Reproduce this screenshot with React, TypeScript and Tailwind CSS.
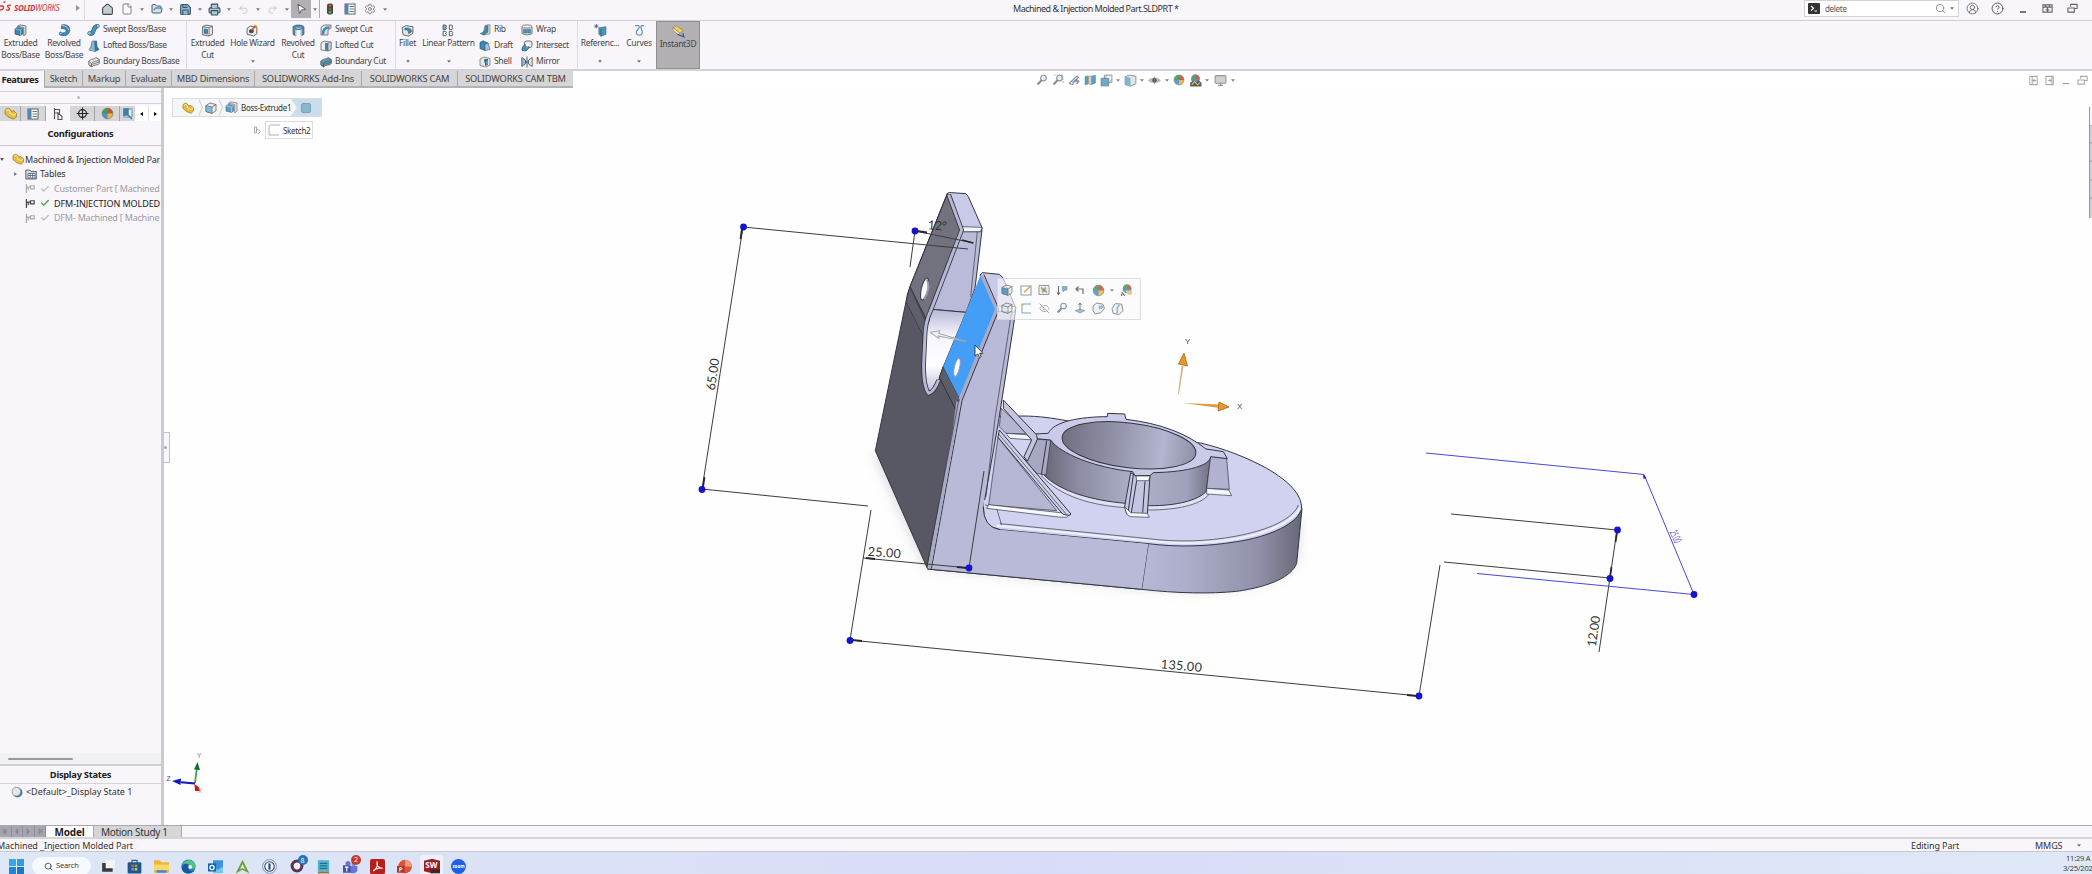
import type { ReactNode } from "react";
import {
  Home,
  File,
  FolderOpen,
  Save,
  Printer,
  Undo2,
  Redo2,
  MousePointer2,
  Settings,
  Search,
  CircleUserRound,
  CircleHelp,
  Crosshair,
  Check,
  Eye,
  EyeOff,
  Monitor,
} from "lucide-react";

function Svg({ size = 12, children }: { size?: number; children: ReactNode }) {
  return (
    <svg width={size} height={size} viewBox="0 0 12 12" fill="none" className="shrink-0">
      {children}
    </svg>
  );
}

function Caret({ className = "w-[10px]" }: { className?: string }) {
  return (
    <span className={`flex shrink-0 items-center justify-center ${className}`}>
      <svg width="4" height="3" viewBox="0 0 4 3">
        <path d="M0 0.3h4L2 2.7z" fill="#777" />
      </svg>
    </span>
  );
}

function Slot({ w, children }: { w: string; children: ReactNode }) {
  return <span className={`flex h-full shrink-0 items-center justify-center ${w}`}>{children}</span>;
}

/* ---------- feature glyphs ---------- */

function CubeIcon({ size = 12, front = "#4d94bd" }: { size?: number; front?: string }) {
  return (
    <Svg size={size}>
      <path d="M1 3.5 5 1l6 1.5v6.3L7 11.3 1 9.5z" fill="#e8eaec" stroke="#666" strokeWidth=".8" />
      <path d="M1 3.5 7 5v6.3L1 9.5z" fill={front} stroke="#49626f" strokeWidth=".6" />
      <path d="M7 5l4-2.5" stroke="#666" strokeWidth=".8" />
    </Svg>
  );
}

function ExtrudeIcon() {
  return (
    <Svg size={13}>
      <path d="M3 2.2 5.5.8 11 1.8v7.5L9 11V3.2z" fill="#e8e8e8" stroke="#666" strokeWidth=".8" />
      <path d="M1 4.5 3 3.2l5 1v5L6 10.5 1 9.3z" fill="#3b88b5" stroke="#24516d" strokeWidth=".7" />
      <path d="M1 4.5l5 1v5M6 5.5l2-1.3" stroke="#a6d4ea" strokeWidth=".6" />
    </Svg>
  );
}

function RevolveIcon() {
  return (
    <Svg size={13}>
      <path d="M3.5.8C8-.2 11.500 2.500 10.800 6.500S5 12.200 1 9.600l1-2.400c2.500 1.600 5.300 1 5.500-.8S5.500 4.500 3 4.200z" fill="#3b88b5" stroke="#24516d" strokeWidth=".6" />
      <path d="M3.300 1.200c3.200.3 5.700 1.600 6.700 4.600M1.300 9.500l3-1.700" stroke="#a6d4ea" strokeWidth=".9" />
    </Svg>
  );
}

function SweptIcon() {
  return (
    <Svg size={13}>
      <path d="M2.5 9.5C8 11 4 4 9.5 3" stroke="#24516d" strokeWidth="4" />
      <path d="M2.5 9.5C8 11 4 4 9.5 3" stroke="#4796c0" strokeWidth="2.8" />
      <circle cx="2.3" cy="9.4" r="1.7" fill="#8fc3dd" stroke="#24516d" strokeWidth=".5" />
      <circle cx="10" cy="2.7" r="1.5" fill="#8fc3dd" stroke="#24516d" strokeWidth=".5" />
    </Svg>
  );
}

function LoftIcon() {
  return (
    <Svg size={12}>
      <path d="M4 1h4.500l.5 5.500 2 3L7 11.500 1 10l2-3.500z" fill="#3b88b5" stroke="#53616a" strokeWidth=".6" />
      <path d="M4 1l-.5 6L1 10l6 1.500L6.500 2z" fill="#8ab8d0" />
      <path d="M6.500 2 7 11.500l4-2-2-3L8.500 1z" fill="#2e749f" />
    </Svg>
  );
}

function BoundaryIcon({ fill = "#e6e7e9" }: { fill?: string }) {
  return (
    <Svg size={12}>
      <path d="M.8 5.500C3 2 6 4 8 1.500l3.300 2v4C9 10 6 8 3.500 11L.8 9z" fill={fill} stroke="#555" strokeWidth=".8" />
      <path d="M.8 5.500 3.500 7.500C6 4.500 9 6 11.300 3.500M3.500 7.500V11M2 9.800C5 7 8 8 11.300 5.500" stroke="#555" strokeWidth=".7" />
    </Svg>
  );
}

function CutIcon({ size = 13 }: { size?: number }) {
  return (
    <Svg size={size}>
      <path d="M1.5 2.5 4.5 1l6 1v7.500L7.500 11l-6-1z" fill="#eee" stroke="#666" strokeWidth=".9" />
      <path d="M7.500 3.500V11M1.500 2.500l6 1 3-1.500" stroke="#666" strokeWidth=".8" />
      <path d="M3 4.500l3 .5v4l-3-.5z" fill="#3b88b5" stroke="#24516d" strokeWidth=".6" />
    </Svg>
  );
}

function HoleWizardIcon() {
  return (
    <Svg size={13}>
      <path d="M1 4 4 2l6 1v6L7 11 1 9.500z" fill="#eee" stroke="#666" strokeWidth=".9" />
      <ellipse cx="5" cy="6.500" rx="2.300" ry="2" fill="#4a4a4a" />
      <path d="M5 6 9 1.500" stroke="#c8503c" strokeWidth="1.400" />
      <path d="M7.500.5l1 1.300L10 1.300l-.4 1.500 1.200 1-1.500.2" stroke="#e2a52c" strokeWidth=".9" />
    </Svg>
  );
}

function RevolvedCutIcon() {
  return (
    <Svg size={13}>
      <path d="M1 2.500C3 .5 9 .5 11 2.500v7L8.500 11V5h-5v6L1 9.500z" fill="#4a8fb6" stroke="#555" strokeWidth=".8" />
      <path d="M3.500 5v6M8.500 5v6M4 3.500c1 .8 3 .8 4 0" stroke="#e8eef2" strokeWidth=".8" />
    </Svg>
  );
}

function SweptCutIcon() {
  return (
    <Svg size={12}>
      <path d="M1 3.500 4 1h7v3L8 6v5H1z" fill="#dcdfe1" stroke="#666" strokeWidth=".8" />
      <path d="M3 10.500C3 6 5 3.500 9.500 3.300" stroke="#3b88b5" strokeWidth="2.400" />
    </Svg>
  );
}

function LoftedCutIcon() {
  return (
    <Svg size={12}>
      <path d="M1 3 4 1.200l7 .8v7.500L8 11l-7-1z" fill="#eee" stroke="#666" strokeWidth=".8" />
      <path d="M5 3v7l3 1V3z" fill="#3b88b5" />
      <path d="M8 3v8l3-1.500V2z" fill="#cfd2d4" stroke="#666" strokeWidth=".6" />
    </Svg>
  );
}

function FilletIcon() {
  return (
    <Svg size={13}>
      <path d="M1 3.500 4.500 1.500 11 2.500v6L7 11.200 2 10z" fill="#e4e6e8" stroke="#666" strokeWidth=".9" />
      <path d="M3.500 4c3-1 6 0 6.500 3L7 9C7 6.500 6 5 3.500 5.500z" fill="#3b88b5" stroke="#24516d" strokeWidth=".5" />
    </Svg>
  );
}

function PatternIcon() {
  return (
    <Svg size={13}>
      {[
        [1, 1],
        [6.8, 1],
        [1, 6.8],
        [6.8, 6.8],
      ].map(([x, y], i) => (
        <path
          key={i}
          d={`M${x} ${y}h2.4a1.3 1.3 0 0 1 0 2.1h.3a1.3 1.3 0 0 1-.3 2H${x}z`}
          fill={i === 0 ? "#7fb5d0" : "#f1f3f5"}
          stroke="#4c5b66"
          strokeWidth=".9"
        />
      ))}
    </Svg>
  );
}

function RibIcon() {
  return (
    <Svg size={12}>
      <path d="M6 1.500 9 .8h2v9L4 11z" fill="#d8dadc" stroke="#777" strokeWidth=".7" />
      <path d="M1 9.500C5 8.500 6 6 6.500 2L9 1.500V8l-4 3z" fill="#3b88b5" stroke="#4e5c66" strokeWidth=".5" />
    </Svg>
  );
}

function DraftIcon() {
  return (
    <Svg size={12}>
      <path d="M1 2.500 4 .8 9 3v6L6 10.500 1 8.500z" fill="#3b88b5" stroke="#24516d" strokeWidth=".7" />
      <path d="M6 4.500v6l5-1.200L9 3z" fill="#9dc8dd" stroke="#49626f" strokeWidth=".6" />
    </Svg>
  );
}

function ShellIcon() {
  return (
    <Svg size={12}>
      <path d="M1 3 5 1l6 1.500V9L7 11 1 9.500z" fill="#e4e6e8" stroke="#777" strokeWidth=".8" />
      <path d="M5 3.500 9 3v5.500L6.500 10z" fill="#2c4a66" />
      <path d="M6.500 5 9 4v4l-2 1z" fill="#49a9b8" />
    </Svg>
  );
}

function WrapIcon() {
  return (
    <Svg size={12}>
      <path d="M1 2.500v7c2 1.800 8 1.800 10 0v-7" fill="#e4e6e8" stroke="#666" strokeWidth=".9" />
      <ellipse cx="6" cy="2.500" rx="5" ry="1.600" fill="#f4f4f4" stroke="#666" strokeWidth=".8" />
      <path d="M2.500 5.500h3V9h-3zM6.500 5.500h3V9h-3z" fill="#4d94bd" stroke="#3a6b8b" strokeWidth=".6" />
    </Svg>
  );
}

function IntersectIcon() {
  return (
    <Svg size={12}>
      <rect x="3.500" y="1" width="7.500" height="6.500" rx="2" fill="#e8e8e8" stroke="#666" strokeWidth=".9" />
      <path d="M1 8 3 5l4-.5L8 8 5 11 1 10.500z" fill="#4d94bd" stroke="#24516d" strokeWidth=".7" />
      <circle cx="6.500" cy="5" r="1.700" fill="#fff" />
    </Svg>
  );
}

function MirrorIcon() {
  return (
    <Svg size={12}>
      <path d="M.8 1.500v9L4.500 8V4z" fill="#8bbbd2" stroke="#44535e" strokeWidth=".8" />
      <path d="M11.200 1.500v9L7.500 8V4z" fill="#e4e6e8" stroke="#44535e" strokeWidth=".8" />
      <path d="M6 .5v11M4.500 6h3" stroke="#333" strokeWidth=".8" />
    </Svg>
  );
}

function ReferenceIcon() {
  return (
    <Svg size={13}>
      <path d="M4.500 3.500 11 2.500v7l-4.500 1.800-2-1.800z" fill="#4d94bd" stroke="#3b6885" strokeWidth=".6" />
      <path d="M6.500 4.500v6.800" stroke="#24516d" strokeWidth=".6" />
      <path d="M2.200 0v4M.2 2h4M.8.6l2.800 2.800M3.600.6.8 3.400" stroke="#3f5a6d" strokeWidth=".7" />
    </Svg>
  );
}

function CurvesIcon() {
  return (
    <Svg size={13}>
      <path d="M2 1.500h3c3 2-3 4-2 7 1 2.500 4.500 2.500 5.500 0 1-3-3-5-.5-7h2" stroke="#5c8dac" strokeWidth="1.100" />
    </Svg>
  );
}

function InstantIcon() {
  return (
    <Svg size={13}>
      <path d="M1 2.500 4 .8l6.500 4.500L7 7.500z" fill="#f2cf55" stroke="#8c7424" strokeWidth=".5" />
      <path d="M1 2.500v2.300l6 5V7.500z" fill="#f9efc9" stroke="#7d7250" strokeWidth=".5" />
      <path d="M5 8.500l6 2.500-1-3.500" stroke="#2f5d8b" strokeWidth="1.100" />
    </Svg>
  );
}

function PartIcon({ size = 13 }: { size?: number }) {
  return (
    <Svg size={size}>
      <path d="M1 3.500C1 1.500 4 .5 5.500 2l1 2L9 3.500 11.500 6v3L9 11.300 4.500 9.500 1 6.500z" fill="#e9bc3a" stroke="#94752a" strokeWidth=".7" />
      <path d="M2 3.500c1-1.500 3-1.200 3.300.2L5.500 6l3.500 1.500 2-1.500" stroke="#fbe9a6" strokeWidth="1" />
    </Svg>
  );
}

function BallIcon({ size = 12 }: { size?: number }) {
  return (
    <Svg size={size}>
      <circle cx="6" cy="6" r="5" fill="#4d8fc9" />
      <path d="M6 6V1a5 5 0 0 0-5 5z" fill="#3f9c57" />
      <path d="M6 6V1a5 5 0 0 1 5 5z" fill="#d14a36" />
      <path d="M6 6h5a5 5 0 0 1-5 5z" fill="#e9b73d" />
      <circle cx="6" cy="6" r="5" stroke="#777" strokeWidth=".5" />
    </Svg>
  );
}

function LensIcon({ area = false }: { area?: boolean }) {
  return (
    <Svg size={12}>
      {area && <path d="M2 1h9v8" stroke="#888" strokeWidth=".8" strokeDasharray="1.5 1" />}
      <circle cx="7.5" cy="4" r="2.8" fill="#eaf2f7" stroke="#7d868c" strokeWidth="1.1" />
      <path d="M5.500 6.200 1.500 10.500" stroke="#6d8290" strokeWidth="2" />
    </Svg>
  );
}

/* ---------- title bar ---------- */

function TitleBar() {
  return (
    <header className="flex h-[21px] shrink-0 border-b border-[#cfced1] bg-[#f8f6fa]">
      <div className="flex w-[85px] items-center border-r border-[#dddce0] pb-1">
        <svg width="12" height="14" viewBox="0 0 12 14" fill="none" stroke="#d8383c">
          <path d="M0 5h2.500c2 1 1 4-2.500 4M3.500 1.500l2-.8M11 4.500C8 3.500 6.500 5 8.500 6.500s1 3-2.500 2.500" strokeWidth="1.400" />
        </svg>
        <span className="ml-[2px] w-[51px] whitespace-nowrap text-[8px] font-bold italic tracking-[-0.3px] text-[#d8383c]">
          SOLID<span className="font-normal">WORKS</span>
        </span>
        <span className="ml-[11px] border-y-[3px] border-l-4 border-y-transparent border-l-[#999]" />
      </div>
      <div className="ml-3 flex h-[18px] items-center">
        <Slot w="w-[20px]">
          <Home size={13} color="#444" fill="#c3cdd5" />
        </Slot>
        <Slot w="w-[20px]">
          <File size={12} color="#666" fill="#fff" strokeWidth={1.6} />
        </Slot>
        <Caret />
        <Slot w="w-[19px]">
          <FolderOpen size={12} color="#43627a" fill="#cfe0ea" />
        </Slot>
        <Caret />
        <Slot w="w-[19px]">
          <Save size={13} color="#3a566b" fill="#8db6cf" />
        </Slot>
        <Caret />
        <Slot w="w-[19px]">
          <Printer size={13} color="#3d4d58" fill="#a9c9d9" />
        </Slot>
        <Caret />
        <Slot w="w-[19px]">
          <Undo2 size={11} color="#c6c5c9" />
        </Slot>
        <Caret />
        <Slot w="w-[19px]">
          <Redo2 size={11} color="#c6c5c9" />
        </Slot>
        <Caret className="w-[9px]" />
        <span className="flex h-[18px] w-[20px] items-center justify-center bg-[#b2b0b3]">
          <MousePointer2 size={12} color="#666" fill="#fff" className="rotate-[12deg]" />
        </span>
        <span className="flex h-[18px] w-[9px] items-center justify-center border-r border-[#aaa]">
          <Caret />
        </span>
        <Slot w="w-[20px]">
          <Svg size={12}>
            <rect x="3" y=".5" width="6" height="11" rx="2" fill="#474747" />
            <circle cx="6" cy="2.7" r="1.4" fill="#d8453a" />
            <circle cx="6" cy="6" r="1.3" fill="#7c6b30" />
            <circle cx="6" cy="9.2" r="1.4" fill="#47b04b" />
          </Svg>
        </Slot>
        <Slot w="w-[20px]">
          <ListIcon />
        </Slot>
        <Slot w="w-[20px]">
          <Settings size={12} color="#777" strokeWidth={1.8} />
        </Slot>
        <Caret />
      </div>
      <div className="ml-[623px] w-[791px] whitespace-nowrap pt-[3px] text-[9px] leading-[12px] tracking-[-0.5px] text-[#333]">
        Machined &amp; Injection Molded Part.SLDPRT *
      </div>
      <div className="flex h-[17px] w-[155px] shrink-0 items-center border border-[#d2d1d5] bg-white pl-[3px] text-[8px] tracking-[-0.3px] text-[#555]">
        <span className="flex h-[11px] w-[12px] items-center justify-center rounded-[1px] bg-[#333]">
          <svg width="8" height="7" viewBox="0 0 8 7" fill="none" stroke="#fff" strokeWidth="1.2">
            <path d="M1 1l2.5 2.300L1 5.600M4.500 6H7" />
          </svg>
        </span>
        <span className="ml-[5px] flex-1">delete</span>
        <Search size={11} color="#888" />
        <Caret className="mx-[2px] w-[8px]" />
      </div>
      <div className="ml-px flex h-[17px] items-center">
        <Slot w="w-[25px]">
          <CircleUserRound size={13} color="#666" strokeWidth={1.6} />
        </Slot>
        <Slot w="w-[25px]">
          <CircleHelp size={13} color="#555" strokeWidth={1.8} />
        </Slot>
        <Slot w="w-[25px]">
          <span className="mt-[6px] h-[2px] w-[6px] bg-[#777]" />
        </Slot>
        <Slot w="w-[25px]">
          <Svg size={11}>
            <path d="M1 2h10v8H1zM1 4.500h10M4 2v2.500M8 2v2.500M4 7.500h4M6 5v5" stroke="#666" strokeWidth="1.2" />
          </Svg>
        </Slot>
        <Slot w="w-[25px]">
          <RestoreIcon color="#666" />
        </Slot>
      </div>
    </header>
  );
}

function ListIcon() {
  return (
    <Svg size={12}>
      <rect x="1" y="1" width="10" height="10" fill="#fff" stroke="#456" strokeWidth=".9" />
      <rect x="1" y="1" width="3.5" height="10" fill="#5388aa" />
      <path d="M5.500 3.500h4.500M5.500 6h4.500M5.500 8.500h4.500" stroke="#667" strokeWidth=".9" />
    </Svg>
  );
}

function RestoreIcon({ color }: { color: string }) {
  return (
    <Svg size={11}>
      <path d="M4 4V1.500h7V6H8" stroke={color} strokeWidth="1.2" />
      <path d="M1 5.500h7V10H1z" stroke={color} strokeWidth="1.2" />
    </Svg>
  );
}

/* ---------- ribbon ---------- */

interface BigButtonProps {
  w: string;
  icon: ReactNode;
  lines: string[];
  caret?: boolean;
  active?: boolean;
}

function BigButton({ w, icon, lines, caret, active }: BigButtonProps) {
  return (
    <button
      className={`flex h-[48px] shrink-0 flex-col items-center pt-[3px] ${w} ${
        active ? "border border-[#8f8e91] bg-[#b2b0b3] pt-[2px]" : ""
      }`}
    >
      <span className="flex h-[13px] items-center">{icon}</span>
      {lines.map((line) => (
        <span key={line} className="whitespace-nowrap leading-[11.5px]">
          {line}
        </span>
      ))}
      {caret && <Caret className="mt-[11px] w-[10px]" />}
    </button>
  );
}

function SmallList({ w, items }: { w: string; items: [ReactNode, string][] }) {
  return (
    <div className={`flex shrink-0 flex-col ${w}`}>
      {items.map(([icon, label]) => (
        <button key={label} className="flex h-[16px] items-center whitespace-nowrap pt-px">
          <span className="mr-[3px] flex w-[13px] justify-center">{icon}</span>
          {label}
        </button>
      ))}
    </div>
  );
}

function Ribbon() {
  return (
    <div className="flex h-[50px] shrink-0 border-b-2 border-[#d3d2d5] bg-[#f8f6fa] text-[8.5px] tracking-[-0.32px] text-[#444]">
      <BigButton w="w-[41px]" icon={<ExtrudeIcon />} lines={["Extruded", "Boss/Base"]} />
      <BigButton w="w-[46px]" icon={<RevolveIcon />} lines={["Revolved", "Boss/Base"]} />
      <SmallList
        w="w-[100px] border-r border-[#dddce0]"
        items={[
          [<SweptIcon />, "Swept Boss/Base"],
          [<LoftIcon />, "Lofted Boss/Base"],
          [<BoundaryIcon />, "Boundary Boss/Base"],
        ]}
      />
      <BigButton w="w-[41px]" icon={<CutIcon />} lines={["Extruded", "Cut"]} />
      <BigButton w="w-[49px]" icon={<HoleWizardIcon />} lines={["Hole Wizard"]} caret />
      <BigButton w="w-[42px]" icon={<RevolvedCutIcon />} lines={["Revolved", "Cut"]} />
      <SmallList
        w="w-[77px] border-r border-[#dddce0]"
        items={[
          [<SweptCutIcon />, "Swept Cut"],
          [<LoftedCutIcon />, "Lofted Cut"],
          [<BoundaryIcon fill="#5a9cc0" />, "Boundary Cut"],
        ]}
      />
      <BigButton w="w-[23px]" icon={<FilletIcon />} lines={["Fillet"]} caret />
      <BigButton w="w-[59px]" icon={<PatternIcon />} lines={["Linear Pattern"]} caret />
      <SmallList
        w="w-[42px]"
        items={[
          [<RibIcon />, "Rib"],
          [<DraftIcon />, "Draft"],
          [<ShellIcon />, "Shell"],
        ]}
      />
      <SmallList
        w="w-[58px] border-r border-[#dddce0]"
        items={[
          [<WrapIcon />, "Wrap"],
          [<IntersectIcon />, "Intersect"],
          [<MirrorIcon />, "Mirror"],
        ]}
      />
      <BigButton w="w-[44px]" icon={<ReferenceIcon />} lines={["Referenc..."]} caret />
      <BigButton w="w-[34px]" icon={<CurvesIcon />} lines={["Curves"]} caret />
      <BigButton w="w-[44px]" icon={<InstantIcon />} lines={["Instant3D"]} active />
    </div>
  );
}

const tabs = [
  ["Features", "w-[44px]"],
  ["Sketch", "w-[38px]"],
  ["Markup", "w-[43px]"],
  ["Evaluate", "w-[46px]"],
  ["MBD Dimensions", "w-[83px]"],
  ["SOLIDWORKS Add-Ins", "w-[107px]"],
  ["SOLIDWORKS CAM", "w-[96px]"],
  ["SOLIDWORKS CAM TBM", "w-[116px]"],
];

function TabRow() {
  return (
    <div className="flex h-[17px] shrink-0 bg-white">
      {tabs.map(([label, w], i) => (
        <div
          key={label}
          className={`flex shrink-0 items-center justify-center whitespace-nowrap text-[9.3px] ${w} ${
            i === 0
              ? "bg-[#f8f6fa] pr-[4px] font-bold tracking-[-0.45px] text-[#222]"
              : "border-b-2 border-l border-b-[#b3b2b5] border-l-[#a9a8ab] bg-[#d6d5d8] pt-px tracking-[-0.2px] text-[#444]"
          }`}
        >
          {label}
        </div>
      ))}
      <div className="ml-[461px] flex h-[18px] items-center opacity-90">
        <Slot w="w-[16px]"><LensIcon /></Slot>
        <Slot w="w-[16px]"><LensIcon area /></Slot>
        <Slot w="w-[16px]">
          <Svg>
            <path d="M1 9.500 9 2l1.500 1.500L5 8M1 9.500l4 1V8l5-.5M8 5l3 2.500L8.500 10" stroke="#72879a" strokeWidth="1.1" />
          </Svg>
        </Slot>
        <Slot w="w-[16px]">
          <Svg>
            <path d="M1 2.500 4 2v8l-3 1z" fill="#4d94bd" stroke="#6b7d88" strokeWidth=".6" />
            <path d="M4.500 2h3v8.500l-3-.5z" fill="#c9cdd0" stroke="#777" strokeWidth=".6" />
            <path d="M8 2l3.500-.8V9L8 10.500z" fill="#4d94bd" stroke="#6b7d88" strokeWidth=".6" />
          </Svg>
        </Slot>
        <Slot w="w-[16px]">
          <Svg size={13}>
            <path d="M4 1h7v7H4z" fill="#f1f1f1" stroke="#888" strokeWidth=".9" />
            <path d="M1 4h7v7H1z" fill="#5d9fc3" stroke="#58707f" strokeWidth=".7" />
            <path d="M4 4 7 1M8 8l3-3" stroke="#888" strokeWidth=".8" />
          </Svg>
        </Slot>
        <Caret className="w-[8px]" />
        <Slot w="w-[16px]">
          <Svg size={13}>
            <path d="M1 2.500 5 1l6 1v7L6 11.300 1 9.800z" fill="#dfe3e6" stroke="#777" strokeWidth=".8" />
            <path d="M1 2.500l5 1v7.800L1 9.800z" fill="#73aecb" />
          </Svg>
        </Slot>
        <Caret className="w-[8px]" />
        <Slot w="w-[17px]">
          <Svg size={13}>
            <path d="M.5 6C3 3 9 3 11.500 6 9 8.500 3 8.500.5 6z" fill="#b9b9bc" stroke="#999" strokeWidth=".6" />
            <circle cx="6" cy="5.800" r="2" fill="#444" />
            <path d="M6 2.500v7" stroke="#777" strokeWidth=".6" />
          </Svg>
        </Slot>
        <Caret className="w-[8px]" />
        <Slot w="w-[16px]"><BallIcon /></Slot>
        <Slot w="w-[16px]">
          <Svg size={13}>
            <circle cx="6" cy="4.500" r="4" fill="#4b87bd" />
            <path d="M6 4.500v-4a4 4 0 0 1 4 4z" fill="#d14a36" />
            <path d="M6 4.500v-4a4 4 0 0 0-4 4z" fill="#3f9c57" />
            <path d="M1 11.500V8l3-2 2 2 3-2 2.500 2v3.500z" fill="#4b4b4b" />
            <path d="M2.500 10 5 7l3 3 2-2" stroke="#e6b93f" strokeWidth="1" />
          </Svg>
        </Slot>
        <Caret className="w-[8px]" />
        <Slot w="w-[18px]"><Monitor size={13} color="#888" fill="#ccc" /></Slot>
        <Caret className="w-[7px]" />
      </div>
      <div className="ml-auto mr-[2px] flex h-[18px] items-center">
        <Slot w="w-[16px]">
          <Svg size={11}>
            <path d="M1 1.500h8v9H1zM3.500 1.500v9M8 6H5M6 4.500 4.500 6 6 7.500" stroke="#aaa" strokeWidth="1.1" />
          </Svg>
        </Slot>
        <Slot w="w-[16px]">
          <Svg size={11}>
            <path d="M1 1.500h8v9H1zM7.500 1.500v9M3 6h3M5 4.500 6.500 6 5 7.500" stroke="#aaa" strokeWidth="1.1" />
          </Svg>
        </Slot>
        <Slot w="w-[16px]">
          <span className="mt-[6px] h-px w-[6px] bg-[#999]" />
        </Slot>
        <Slot w="w-[16px]">
          <RestoreIcon color="#aaa" />
        </Slot>
      </div>
    </div>
  );
}

/* ---------- configuration panel ---------- */

function ConfigGlyph({ color = "#444" }: { color?: string }) {
  return (
    <svg width="11" height="11" viewBox="0 0 12 12" fill="none" stroke={color} strokeWidth="1.3">
      <path d="M1.500 1v10M1.500 4.500h4M6 3h4v3.500H6zM3.500 8V4.500" />
    </svg>
  );
}

function ConfigRow({ label, active = false }: { label: string; active?: boolean }) {
  return (
    <div className={`flex h-[14.7px] items-center whitespace-nowrap pl-[25px] ${active ? "tracking-[-0.08px] text-[#222]" : "text-[#9c9b9f]"}`}>
      <ConfigGlyph color={active ? "#444" : "#aaa"} />
      <Check size={10} strokeWidth={3} color={active ? "#3aa826" : "#bbb"} className="ml-[4px] mr-[4px] shrink-0" />
      {label}
    </div>
  );
}

function SidePanel() {
  return (
    <aside className="flex w-[164px] shrink-0 flex-col border-r-[3px] border-[#cbcacd] bg-[#f8f6fa] text-[9px] tracking-[-0.2px] text-[#333]">
      <div className="mt-[3px] flex h-[13px] items-center justify-center border-b border-t border-[#d5d4d7]">
        <span className="-ml-[4px] h-[3px] w-[3px] rounded-full bg-[#bbb]" />
      </div>
      <div className="mt-[2px] flex h-[15px] bg-[#d6d5d8]">
        <Slot w="w-[21px] border-r border-[#a5a4a7]"><PartIcon /></Slot>
        <Slot w="w-[25px] border-r border-[#a5a4a7]"><ListIcon /></Slot>
        <Slot w="w-[24px] bg-[#f8f6fa]">
          <svg width="11" height="12" viewBox="0 0 11 12" fill="none" stroke="#555">
            <path d="M1.500 0v11M1.500 1.500h5v3.500h-5M5 5l4 3.500v3H5z" strokeWidth="1.1" />
          </svg>
        </Slot>
        <Slot w="w-[25px] border-r border-[#a5a4a7]">
          <Svg size={13}>
            <circle cx="6" cy="6" r="3.600" stroke="#222" strokeWidth="1.1" />
            <path d="M6 .5v11M.5 6h11" stroke="#222" strokeWidth="1" />
          </Svg>
        </Slot>
        <Slot w="w-[25px] border-r border-[#a5a4a7]"><BallIcon size={13} /></Slot>
        <Slot w="w-[15px]">
          <Svg size={12}>
            <path d="M2 1h8v8H2z" fill="#e9eff3" stroke="#477" strokeWidth=".7" />
            <path d="M2 1h4v6H2zM6 7l4 4" fill="#3d7fa8" stroke="#3d7fa8" strokeWidth="1.5" />
          </Svg>
        </Slot>
        <Slot w="w-[13px] bg-white"><span className="border-y-[2.5px] border-r-[3px] border-y-transparent border-r-black" /></Slot>
        <Slot w="w-[13px] border-l border-[#ddd] bg-white"><span className="border-y-[2.5px] border-l-[3px] border-y-transparent border-l-black" /></Slot>
      </div>
      <div className="mt-px flex h-[24px] items-center justify-center border-b border-[#cbcacd] text-[9.3px] font-bold text-[#222]">
        Configurations
      </div>
      <div className="flex flex-col pt-[6px]">
        <div className="flex h-[14.7px] items-center whitespace-nowrap">
          <span className="mr-[8px] border-x-[2.5px] border-t-[3px] border-x-transparent border-t-[#555]" />
          <PartIcon size={12} />
          <span className="ml-[1px] tracking-[-0.18px]">Machined &amp; Injection Molded Par</span>
        </div>
        <div className="flex h-[14.7px] items-center pl-[14px]">
          <span className="mr-[8px] border-y-[2.5px] border-l-[3px] border-y-transparent border-l-[#777]" />
          <Svg size={12}>
            <path d="M.8 2h4l1 1.500h5.500V11H.8z" fill="#dcdde0" stroke="#555" strokeWidth=".9" />
            <path d="M3 5.500h7V10H3zM3 7.500h7M5.300 5.500V10M7.600 5.500V10" fill="#fff" stroke="#41617a" strokeWidth=".8" />
          </Svg>
          <span className="ml-[3px]">Tables</span>
        </div>
        <ConfigRow label="Customer Part [ Machined" />
        <ConfigRow label="DFM-INJECTION MOLDED" active />
        <ConfigRow label="DFM- Machined [ Machine" />
      </div>
      <div className="mt-auto flex h-[13px] items-center border-b-2 border-[#d0cfd2] bg-[#f1f0f2] pl-[8px]">
        <span className="h-[2px] w-[65px] rounded bg-[#99989b]" />
      </div>
      <div className="flex h-[18px] items-center justify-center border-b border-[#d5d4d7] pt-px text-[9.3px] font-bold tracking-[-0.28px] text-[#222]">
        Display States
      </div>
      <div className="flex h-[41px] items-start pl-[11px] pt-[2px]">
        <Svg size={12}>
          <circle cx="6.500" cy="6.500" r="5" fill="#3d7fa8" />
          <circle cx="5.300" cy="5.600" r="4.300" fill="#e4e8eb" stroke="#888" strokeWidth=".7" />
        </Svg>
        <span className="ml-[3px] leading-[12px] tracking-[-0.04px]">&lt;Default&gt;_Display State 1</span>
      </div>
    </aside>
  );
}

/* ---------- model ---------- */

const EDGE = "#33343f";

function Flange() {
  // base body, boss and gussets, drawn at triple scale
  return (
    <g transform="translate(840 380) scale(.33333)" stroke={EDGE} strokeWidth="3" strokeLinejoin="round">
      <path d="M262 567 905 628C1010 640 1110 642 1190 634 1290 620 1355 590 1370 550L1386 385 1000 300 430 330z" fill="url(#rim)" />
      <path
        d="M430 380 440 110 545 108C600 108 640 115 680 122L1085 190C1150 205 1220 232 1280 265 1350 305 1385 345 1385 385 1375 430 1290 470 1190 485 1100 500 1010 502 925 491L480 449Q425 440 430 380z"
        fill="#d0d2ef"
      />
      <path d="M470 438 480 438 925 482C1010 493 1100 491 1190 476 1290 459 1362 421 1380 385" fill="none" stroke="#eeeef9" strokeWidth="7" />
      <path d="M480 431 925 476C1010 487 1100 485 1185 469 1290 450 1360 415 1375 375" fill="none" strokeWidth="2" />
      <path d="M925 491 905 628" fill="none" />
      <path d="M436 375 470 385 485 436" fill="none" strokeWidth="2" />

      {/* boss fillet */}
      <path d="M605 288C660 350 760 378 862 383L925 390C1010 390 1080 375 1105 345L1090 300 630 250z" fill="#dfe0f3" strokeWidth="2" />
      {/* boss wall */}
      <path d="M632 175 612 285C660 335 760 362 858 370L928 377C1010 378 1075 360 1098 335L1115 215z" fill="url(#wall)" />
      <path d="M590 178 632 180 618 285 590 280 555 240z" fill="#a6a8c4" strokeWidth="2" />
      <path d="M620 182 604 284" fill="none" />
      {/* right lug */}
      <path d="M1112 228 1160 236 1168 328 1100 325z" fill="#b0b2cf" strokeWidth="2" />
      <path d="M1100 325 1166 330 1175 347 1100 342z" fill="#f5f5fc" strokeWidth="2" />
      {/* boss top ring */}
      <path
        d="M582 162 625 160C640 125 720 110 802 110L803 100 854 102 858 118C960 130 1040 160 1098 207L1150 215 1162 236 1112 230C1110 255 1050 276 940 278L930 287 885 288 878 275C760 262 660 220 632 180L590 176z"
        fill="#c9cbe9"
      />
      <ellipse cx="867" cy="196" rx="202" ry="67" transform="rotate(7 867 196)" fill="url(#bore)" />
      {/* front lug */}
      <path d="M872 278 888 288 930 288 922 402 860 402 854 380z" fill="#c3c5e2" />
      <path d="M888 288 930 288 926 302 890 302z" fill="#fff" strokeWidth="2" />
      <path d="M890 302 874 398M880 285 864 398M915 304 908 398" fill="none" />
      <path d="M854 380Q858 408 872 410L928 412 922 400 872 398z" fill="#f5f5fc" strokeWidth="2" />

      {/* rear gusset */}
      <path d="M484 85 568 162 498 160 478 140z" fill="#b3b5d1" strokeWidth="2" />
      <path d="M498 160 570 165 580 180 510 175z" fill="#f5f5fc" strokeWidth="2" />
      <path d="M490 60 490 85 575 180 552 230 562 244 592 178 590 165z" fill="#c3c5e0" />
      {/* front gusset */}
      <path d="M474 172 650 392 446 375z" fill="#b4b6d3" strokeWidth="2" />
      <path d="M440 385 446 374 660 398 690 402 680 412 655 411z" fill="#f8f8fd" strokeWidth="2" />
      <path d="M478 150 693 402Q690 410 668 402L474 172z" fill="#cdcfe9" />
      <path d="M476 162 680 404" fill="none" strokeWidth="2" />
    </g>
  );
}

function Plates() {
  return (
    <g transform="translate(860 180) scale(.33333)" stroke={EDGE} strokeWidth="3" strokeLinejoin="round">
      {/* rear prong */}
      <path d="M305 150 366 150 345 325 318 397 215 388z" fill="#b9bbd9" />
      <path d="M262 40Q268 36 275 38L318 41 325 50 367 145 362 155 305 155z" fill="#c8cae8" />
      <path d="M305 140 366 142 362 155 308 155z" fill="#f3f3fb" strokeWidth="2" />
      <path d="M352 155 332 350" fill="none" strokeWidth="2" />
      <path d="M215 388 318 397 250 560C235 610 222 645 205 645 182 620 185 560 190 465z" fill="url(#saddle)" />

      {/* dark rear face */}
      <path
        d="M262 40 150 320Q141 342 138 365L46 812 202 1165 292 705 298 655 250 560 238 595Q222 645 205 645 183 620 187 550L190 465Q192 425 215 388L303 148z"
        fill="#575863"
      />
      <path d="M262 42 150 320 205 430 215 388 303 148z" fill="#71727e" />
      <path d="M150 320 198 428 190 468 138 365z" fill="#5f606b" strokeWidth="2" />
      <path d="M250 560 300 658 290 695 238 592z" fill="#5c5d68" />
      <ellipse cx="194" cy="327" rx="10" ry="34" transform="rotate(13 194 327)" fill="#fafafd" />
      <path d="M200 298Q214 320 192 358" fill="none" stroke="#9a9bb2" strokeWidth="6" />

      {/* fillet along the rear prong and the saddle */}
      <path d="M266 44 305 150 212 392Q196 425 195 465L191 550Q190 620 206 640 222 636 236 600" fill="none" strokeWidth="14" />
      <path d="M266 44 305 150 212 392Q196 425 195 465L191 550Q190 620 206 640 222 636 236 600" fill="none" stroke="#b7b9d4" strokeWidth="9" />

      {/* front prong */}
      <path d="M410 385 467 390 464 420 418 715 415 727 372 965 370 985Q372 1040 420 1049L865 1092 845 1228 202 1167 290 700 300 655z" fill="#b8bad8" stroke="none" />
      <path d="M467 390 460 440 415 727 374 960M202 1167 845 1228" fill="none" />
      <path d="M370 980Q370 1042 420 1049" fill="none" />
      <path d="M455 395 405 715 378 950" fill="none" strokeWidth="2" />
      <path d="M360 285 368 278 418 283 428 292 468 385 464 395 408 392z" fill="#c8cae8" />
      <path d="M408 378 466 380 464 396 408 394z" fill="#f3f3fb" strokeWidth="2" />
      <path d="M362 284 408 385 298 655 250 560 330 365z" fill="#449df7" stroke="none" />
      <path d="M365 286 410 388 300 658" fill="none" stroke="#a9abc6" strokeWidth="9" />
      <path d="M372 284 417 388 306 662 288 760 214 1166" fill="none" />
      <path d="M294 665 284 745 208 1162" fill="none" stroke="#a9abc6" strokeWidth="10" />
      <path d="M296 660 288 705 200 1162" fill="none" strokeWidth="2" />
      <ellipse cx="291" cy="562" rx="8" ry="28" transform="rotate(13 291 562)" fill="#fafafd" stroke="#7f9fc8" />
      <path d="M210 457 240 452 236 460 320 485 234 468 238 476z" fill="#eee" stroke="#a5a5a5" />
    </g>
  );
}

interface LineProps {
  pts: [number, number, number, number];
  color?: string;
}

function DimLine({ pts: [x1, y1, x2, y2], color = "#3d3d3d" }: LineProps) {
  return <line x1={x1} y1={y1} x2={x2} y2={y2} stroke={color} strokeWidth="1" />;
}

const dimensionLines: [number, number, number, number][] = [
  [743, 227, 968, 249],
  [743, 227, 702, 489],
  [702, 489, 868, 506],
  [915, 231, 974, 243],
  [915, 231, 910, 267],
  [871, 510, 850, 640],
  [863, 558, 969, 568],
  [969, 568, 984, 471],
  [850, 640, 1419, 696],
  [1419, 696, 1440, 565],
  [1451, 514, 1617, 530],
  [1444, 562, 1610, 578],
  [1617, 530, 1599, 652],
];

const arrowHeads: [number, number, number, number][] = [
  [742, 229, 740.5, 239],
  [703, 487, 704.5, 477],
  [917, 231, 927, 232.5],
  [973, 243, 962, 240],
  [866, 558, 875, 559],
  [967, 568, 957, 567],
  [852, 640, 862, 641],
  [1417, 696, 1407, 695],
  [1617, 532, 1615.5, 542],
  [1610, 577, 1611.5, 567],
];

const handles = [
  [743.5, 227],
  [702, 489.5],
  [915, 231],
  [850, 640.5],
  [1419, 696],
  [1617.5, 530],
  [1610, 578.5],
  [1694, 594.5],
  [969, 568],
];

function Dimensions() {
  return (
    <g>
      {dimensionLines.map((pts) => (
        <DimLine key={pts.join()} pts={pts} />
      ))}
      <DimLine pts={[1426, 453, 1644, 474.5]} color="#4848dd" />
      <DimLine pts={[1644, 474.5, 1694, 594.5]} color="#4848dd" />
      <DimLine pts={[1477, 573.5, 1694, 594.5]} color="#4848dd" />
      <path d="M1643 474l3.500 4-3 1z" fill="#2525c8" />
      {arrowHeads.map(([x1, y1, x2, y2]) => (
        <line key={`${x1}-${y1}`} x1={x1} y1={y1} x2={x2} y2={y2} stroke="#2a2a2a" strokeWidth="1.8" />
      ))}
      {handles.map(([x, y]) => (
        <circle key={`${x}-${y}`} cx={x} cy={y} r="3.4" fill="#1414cf" />
      ))}
      <g fill="#333" fontSize="12.5" className="font-['Lato',sans-serif]" textAnchor="middle">
        <text transform="translate(717 375) rotate(-82)" textLength="32">65.00</text>
        <text transform="translate(884 557) rotate(4)" textLength="33">25.00</text>
        <text transform="translate(1181 670) rotate(5)" textLength="41">135.00</text>
        <text transform="translate(1598 632) rotate(-82)" textLength="31">12.00</text>
        <text transform="translate(937 230) rotate(4)" textLength="19">12°</text>
        <text transform="translate(1672 538) rotate(67)" fontSize="11" fill="#5c5ce0" textLength="13" lengthAdjust="spacingAndGlyphs">25.00</text>
      </g>
    </g>
  );
}

function Scene() {
  return (
    <svg width="1928" height="737" viewBox="164 88 1928 737" className="block">
      <defs>
        <linearGradient id="rim" gradientUnits="userSpaceOnUse" x1="880" x2="1386" y1="0" y2="0">
          <stop offset="0" stopColor="#b8bad8" />
          <stop offset=".35" stopColor="#aaacc8" />
          <stop offset=".75" stopColor="#8f90a8" />
          <stop offset="1" stopColor="#666776" />
        </linearGradient>
        <linearGradient id="wall">
          <stop offset="0" stopColor="#666776" />
          <stop offset=".2" stopColor="#8b8ca3" />
          <stop offset=".55" stopColor="#afb1cc" />
          <stop offset=".85" stopColor="#a0a2bb" />
          <stop offset="1" stopColor="#6f7080" />
        </linearGradient>
        <linearGradient id="bore">
          <stop offset="0" stopColor="#70717f" />
          <stop offset=".35" stopColor="#8d8ea4" />
          <stop offset=".75" stopColor="#b3b5d1" />
          <stop offset="1" stopColor="#8f90a6" />
        </linearGradient>
        <linearGradient id="saddle" x1="0" y1="0" x2="0" y2="1">
          <stop offset="0" stopColor="#b4b6d6" />
          <stop offset=".3" stopColor="#f4f4fd" />
          <stop offset=".65" stopColor="#fff" />
          <stop offset="1" stopColor="#b5b7d6" />
        </linearGradient>
        <filter id="soft" x="-10%" y="-10%" width="120%" height="120%">
          <feGaussianBlur stdDeviation="6" />
        </filter>
      </defs>

      <path d="M874 455 925 568 1140 588Q1270 600 1298 561L1300 520 950 430z" fill="#c4c4ca" opacity=".6" filter="url(#soft)" />
      <Flange />
      <Plates />
      <Dimensions />

      {/* model origin axes */}
      <path d="M1178 394 1181.5 366 1183.500 366 1179 394z" fill="#d5b183" />
      <path d="M1184 353 1187.500 366 1178.500 364z" fill="#ee9522" stroke="#9d681e" strokeWidth=".8" />
      <path d="M1183 403 1220 404.500 1220 408z" fill="#dd9a42" />
      <path d="M1219 402 1229 407 1218 411z" fill="#ee9522" stroke="#9d681e" strokeWidth=".8" />
      <g className="font-['Liberation_Sans',sans-serif]" fontSize="8" fill="#444">
        <text x="1185" y="344">Y</text>
        <text x="1237" y="409">X</text>
      </g>

      {/* view triad */}
      <path d="M195 783 197 767" stroke="#3ea24a" strokeWidth="1.8" />
      <path d="M197.500 762 200 770 194 769.500z" fill="#1a6b25" />
      <path d="M195 783.500 181 782.300" stroke="#1414b4" strokeWidth="2" />
      <path d="M172 781 181 778.500 180.500 785z" fill="#1414c0" />
      <path d="M194.500 784 199 787.500 200 791 195 791z" fill="#c01a1a" />
      <g className="font-['Liberation_Sans',sans-serif]" fontSize="6.5">
        <text x="197" y="758" fill="#6a8f6e">Y</text>
        <text x="166.500" y="781" fill="#3838d8">Z</text>
        <text x="198" y="793" fill="#c88">X</text>
      </g>

      {/* pointer */}
      <path d="M975 345v11l2.800-2 1.600 3.500 1.800-.8-1.500-3.400h3.200z" fill="#fff" stroke="#333" strokeWidth=".9" />

      {/* panel splitter grip */}
      <path d="M164 432.500h5.500v30H164" fill="#f8f6fa" stroke="#c0bfc2" />
      <circle cx="165.500" cy="447.500" r="1.500" fill="#aaa" />

      {/* task pane tabs */}
      <rect x="2089" y="107" width="3" height="111" fill="#cfcfd3" />
      <path d="M2089.500 107v111M2089 125h3M2089 143h3M2089 161h3M2089 180h3M2089 198h3" stroke="#99999d" />
      <rect x="2090" y="107" width="2" height="18" fill="#f8f6fa" />
    </svg>
  );
}

function Breadcrumb() {
  return (
    <div className="absolute left-[8px] top-[10px] text-[8px] tracking-[-0.3px] text-[#333]">
      <div className="flex h-[19px] w-[150px] items-center border border-[#dcdce0] bg-[#f5f6f8]">
        <Slot w="w-[26px] pl-[4px]"><PartIcon size={12} /></Slot>
        <svg width="4" height="17" viewBox="0 0 4 16" fill="none" stroke="#ccc"><path d="M0 0 3.500 8 0 16" /></svg>
        <Slot w="w-[16px]"><CubeIcon front="#8ab9d1" /></Slot>
        <svg width="4" height="17" viewBox="0 0 4 16" fill="none" stroke="#ccc"><path d="M0 0 3.500 8 0 16" /></svg>
        <span className="flex w-[16px] justify-center opacity-80"><ExtrudeIcon /></span>
        <span className="w-[52px] whitespace-nowrap pl-[2px] pt-px">Boss-Extrude1</span>
        <svg width="7" height="17" viewBox="0 0 7 17"><path d="M0 0h7v17H0l6-8.500z" fill="#cbdcec" /></svg>
        <span className="flex h-full flex-1 items-center bg-[#cbdcec] pl-[3px]">
          <span className="h-[10px] w-[10px] rounded-[2px] border border-[#7f9fb2] bg-[#86b9cf]" />
        </span>
      </div>
      <div className="ml-[81px] mt-[4px] flex items-center">
        <svg width="9" height="9" viewBox="0 0 9 9" fill="none" stroke="#aaa"><path d="M1.500 1v6h2V1zM4 3l3.500 2.500L5 8" /></svg>
        <div className="ml-[3px] flex h-[18px] w-[48px] items-center border border-[#dcdce0] bg-white">
          <svg width="17" height="12" viewBox="0 0 17 12" fill="none" stroke="#999"><path d="M14 1H4.500Q3 1 3 3v8h10" strokeWidth=".8" /></svg>
          <span className="pt-px">Sketch2</span>
        </div>
      </div>
    </div>
  );
}

function ContextToolbar() {
  return (
    <div className="absolute left-[833px] top-[190px] flex h-[42px] w-[144px] flex-col justify-center border border-[#d8d8dc] bg-[#fafafb]/75 opacity-85">
      <div className="flex h-[18px] items-center">
        <Slot w="w-[18px]"><CubeIcon /></Slot>
        <Slot w="w-[19px]">
          <Svg>
            <path d="M1 2h10v9H1z" fill="#fff" stroke="#6c93ab" strokeWidth="1.1" />
            <path d="M4 8.500 10.500 2" stroke="#d59a35" strokeWidth="1.5" />
          </Svg>
        </Slot>
        <Slot w="w-[18px]">
          <Svg>
            <path d="M1 1.500h10v9H1z" fill="#ececec" stroke="#888" strokeWidth="1" />
            <path d="M3 3.500l6 5M8 3.500 4 8.500" stroke="#777" strokeWidth="1.1" />
            <circle cx="6" cy="6" r="2" stroke="#a78d50" strokeWidth=".8" />
          </Svg>
        </Slot>
        <Slot w="w-[18px]">
          <Svg>
            <path d="M2.500 2v8M1 8.500l1.500 2L4 8.500" stroke="#555" strokeWidth="1.1" />
            <path d="M6 2.500h5v3.500L8 6.500 7 8z" fill="#6ea6c6" stroke="#5b7d92" strokeWidth=".6" />
          </Svg>
        </Slot>
        <Slot w="w-[18px]">
          <Svg>
            <path d="M2 5h7v5M4.500 2.500 2 5l2.500 2.500" stroke="#555" strokeWidth="1.2" />
          </Svg>
        </Slot>
        <Slot w="w-[19px]"><BallIcon size={13} /></Slot>
        <Caret className="w-[8px]" />
        <Slot w="w-[20px]">
          <Svg size={13}>
            <circle cx="6.500" cy="4.500" r="4" fill="#4b87bd" />
            <path d="M6.500 4.500v-4a4 4 0 0 1 4 4z" fill="#d14a36" />
            <path d="M6.500 4.500v-4a4 4 0 0 0-4 4z" fill="#3f9c57" />
            <path d="M5 6h6v4H7z" fill="#dfc374" />
            <path d="M1.500 7.500l3 3.500M1.500 11V9" stroke="#444" strokeWidth="1" />
          </Svg>
        </Slot>
      </div>
      <div className="flex h-[18px] items-center">
        <Slot w="w-[18px]"><CubeIcon front="#dfe3e6" /></Slot>
        <Slot w="w-[19px]">
          <Svg>
            <path d="M11 2H4Q2 2 2 4v7h9" stroke="#6c93ab" strokeWidth="1" />
            <circle cx="2.500" cy="2.500" r="1.300" fill="#e0a63b" />
          </Svg>
        </Slot>
        <Slot w="w-[18px]"><EyeOff size={11} color="#999" /></Slot>
        <Slot w="w-[18px]"><LensIcon /></Slot>
        <Slot w="w-[18px]">
          <Svg>
            <path d="M1 8.500 6 7l5 1.500L6 11z" fill="#8bb9d1" stroke="#65869a" strokeWidth=".7" />
            <path d="M6 8V1M4.500 3 6 1l1.500 2" stroke="#666" strokeWidth="1" />
          </Svg>
        </Slot>
        <Slot w="w-[19px]">
          <Svg size={13}>
            <path d="M1 3.500 4.500 1l5.500 1 1.500 4L8 10l-5 1-2-3z" fill="#f1f1f2" stroke="#777" strokeWidth=".9" />
            <path d="M6 3.500 10 3v3L6.500 7z" fill="#7fb2cc" />
          </Svg>
        </Slot>
        <Slot w="w-[18px]">
          <Svg size={13}>
            <path d="M1 6 4 1.500l6 .5 1 6-3.500 3.500L2 10.500z" fill="#f1f1f2" stroke="#777" strokeWidth=".9" />
            <path d="M5 5 7 2.500l1.500.3L6.500 6v4.500H5z" fill="#7fb2cc" />
          </Svg>
        </Slot>
      </div>
    </div>
  );
}

/* ---------- bottom bars ---------- */

function BottomTabs() {
  return (
    <div className="flex h-[14px] shrink-0 border-b-2 border-t border-b-[#d5d4d7] border-t-[#aaa9ac] bg-[#f8f6fa] text-[#333]">
      <div className="flex w-[46px] bg-[#a6a5b0]">
        {["M4 2 1.5 5 4 8zM1 2v6", "M4 2 1.5 5 4 8z", "M2 2l2.5 3L2 8z", "M2 2l2.5 3L2 8zM5.5 2v6"].map((d) => (
          <span key={d} className="flex flex-1 items-center justify-center border-r border-[#8d8c97]">
            <svg width="6" height="9" viewBox="0 0 6 10">
              <path d={d} fill="#8b8a95" stroke="#85848f" strokeWidth=".8" />
            </svg>
          </span>
        ))}
      </div>
      <div className="flex w-[47px] items-center justify-center bg-white text-[10px] font-bold leading-none tracking-[-0.2px] text-[#222]">Model</div>
      <div className="flex w-[89px] items-center border-x border-[#a9a8ab] bg-[#d6d5d8] pl-[7px] text-[10px] leading-none tracking-[-0.3px]">
        Motion Study 1
      </div>
    </div>
  );
}

function StatusBar() {
  return (
    <div className="flex h-[13px] shrink-0 items-center border-b border-[#c9c8cc] bg-[#f8f6fa] pt-px text-[9px] leading-none tracking-[-0.1px] text-[#333]">
      <span className="-ml-[3px] w-[1914px]">Machined _Injection Molded Part</span>
      <span className="w-[124px]">Editing Part</span>
      <span className="w-[39px]">MMGS</span>
      <Caret />
    </div>
  );
}

function Badge({ color, text }: { color: string; text: string }) {
  return (
    <span className={`absolute -top-[4px] left-[8px] flex h-[10px] w-[10px] items-center justify-center rounded-full text-[7px] leading-none text-white ${color}`}>
      {text}
    </span>
  );
}

function Taskbar() {
  return (
    <footer className="flex h-[22px] shrink-0 items-start overflow-hidden bg-linear-to-r from-[#dde7f5] via-[#d9dcf8] to-[#dfe8f6] font-['Open_Sans',sans-serif]">
      <div className="mt-[3px] flex h-[22px] items-center">
        <Slot w="w-[32px]">
          <span className="grid grid-cols-2 gap-px">
            <i className="h-[7px] w-[7px] bg-[#35a5e5]" />
            <i className="h-[7px] w-[7px] bg-[#2d9ce0]" />
            <i className="h-[7px] w-[7px] bg-[#1f86d3]" />
            <i className="h-[7px] w-[7px] bg-[#1878c8]" />
          </span>
        </Slot>
        <div className="flex h-[18px] w-[59px] items-center rounded-full bg-[#f6f9fd] pl-[12px] text-[7.5px] tracking-[-0.2px] text-[#333]">
          <Search size={9} color="#333" className="mr-[3px]" />
          Search
        </div>
        <div className="ml-[3px] flex h-full items-center">
          <Slot w="w-[27px]">
            <Svg size={14}><path d="M4 1h8v7H4z" fill="#f4f4f4" /><path d="M1 3.500h3V8h6v3H1z" fill="#3a3a3a" /></Svg>
          </Slot>
          <Slot w="w-[27px]">
            <Svg size={15}>
              <path d="M4 3V1h4v2" stroke="#2a5d91" />
              <rect x=".5" y="2.500" width="11" height="9" rx="1" fill="#24568c" />
              <path d="M3.500 4.500h2v2h-2z" fill="#e8553c" /><path d="M6.200 4.500h2v2h-2z" fill="#76b643" />
              <path d="M3.500 7.200h2v2h-2z" fill="#41a5ee" /><path d="M6.200 7.200h2v2h-2z" fill="#f5bd32" />
            </Svg>
          </Slot>
          <Slot w="w-[27px]">
            <Svg size={15}><path d="M0 1h4.500L6 2.500h6v8.500H0z" fill="#efb53a" /><path d="M0 4.500h12V9H0z" fill="#fbd766" /><path d="M2 9h8v2H2z" fill="#3b8cd2" /></Svg>
          </Slot>
          <Slot w="w-[27px]">
            <Svg size={15}>
              <circle cx="6" cy="6" r="5.700" fill="#2087c8" />
              <path d="M1 4.500C3 0 10-.5 11.600 5c.3 3-3 3.500-5 2.500C8 4 4 2.500 1 4.500z" fill="#56c37d" />
              <path d="M.5 7c1-4 6-4 6-.5-1 3 2 4 4.500 2.500C8 13 1 12.500.5 7z" fill="#17589d" />
              <circle cx="7.300" cy="6.300" r="1.500" fill="#eef6fa" />
            </Svg>
          </Slot>
          <Slot w="w-[27px]">
            <Svg size={15}><path d="M4 1h8v10H4z" fill="#3b93dd" /><path d="M4 6l4 2.500L12 6v5H4z" fill="#7cc3f2" /><path d="M0 3.500h6.500v6.500H0z" fill="#1465b4" /><circle cx="3.200" cy="6.700" r="1.700" stroke="#fff" strokeWidth="1" /></Svg>
          </Slot>
          <Slot w="w-[27px]">
            <Svg size={15}><path d="M6 .5 11.500 11.500 6 8.500.5 11.500z" fill="#6aa33a" /><path d="M6 4 8 8.300 6 7.200 4 8.300z" fill="#e8efe0" /></Svg>
          </Slot>
          <Slot w="w-[27px]">
            <Svg size={15}><circle cx="6" cy="6" r="5.500" fill="#f4f6fb" stroke="#7b8db0" strokeWidth=".8" /><circle cx="6" cy="6" r="3.800" stroke="#2c4e8e" strokeWidth=".9" /><path d="M6 3.500v5" stroke="#26467f" strokeWidth="1.700" /></Svg>
          </Slot>
          <Slot w="w-[27px]">
            <span className="relative">
              <Svg size={14}><circle cx="6" cy="6" r="4.200" fill="#f7eef4" stroke="#57344f" strokeWidth="2.600" /></Svg>
              <Badge color="bg-[#2272b9]" text="8" />
            </span>
          </Slot>
          <Slot w="w-[27px]">
            <Svg size={15}><path d="M1.500 1h9v9h-9z" fill="#4fb2cf" /><path d="M3 3.500h6M3 5.500h6M3 7.500h6" stroke="#176683" strokeWidth=".8" /><path d="M1.500 10h9v1.500h-9z" fill="#9b6e42" /></Svg>
          </Slot>
          <Slot w="w-[27px]">
            <span className="relative">
              <Svg size={15}><circle cx="4" cy="3.500" r="2" fill="#6b73d6" /><circle cx="8.500" cy="4" r="1.800" fill="#828ae2" /><path d="M3 5.500h8.500V9c0 3-6 3-7 1z" fill="#6b73d6" /><path d="M0 5h6v6H0z" fill="#4450b0" /><path d="M1.500 6.500h3M3 6.500v3.500" stroke="#fff" strokeWidth=".9" /></Svg>
              <Badge color="bg-[#c43a2c]" text="2" />
            </span>
          </Slot>
          <Slot w="w-[27px]">
            <Svg size={15}><rect width="12" height="12" rx="1.500" fill="#b6201b" /><path d="M2.500 9.500C5 8.500 6.500 5 5.700 2.500 5 5 7 7.500 10 7.500 7.500 6.800 5 7.500 2.500 9.500z" stroke="#fff" strokeWidth=".9" /></Svg>
          </Slot>
          <Slot w="w-[27px]">
            <Svg size={15}><circle cx="6.500" cy="6" r="5.500" fill="#d9553a" /><path d="M6.500.5A5.500 5.500 0 0 1 12 6H6.500z" fill="#f09a7f" /><path d="M0 5.500h6v5.500H0z" fill="#b93224" /><path d="M2.200 10V7h1.300q1 .8 0 1.500H2.200" stroke="#fff" strokeWidth=".8" /></Svg>
          </Slot>
          <span className="mx-[2px] flex h-[22px] w-[23px] items-center justify-center rounded-[3px] bg-[#eef1fb]">
            <Svg size={16}>
              <path d="M0 2 6 .5 12 2v8l-6 1.500L0 10z" fill="#a11d20" />
              <text x="1" y="7.500" fontSize="6" fill="#fff" fontWeight="bold">SW</text>
              <rect x="5" y="8.500" width="7" height="3" fill="#3a2a2a" />
            </Svg>
          </span>
          <Slot w="w-[27px]">
            <span className="flex h-[15px] w-[15px] items-center justify-center rounded-full bg-[#1d5fe8] text-[4.5px] font-bold text-white">zoom</span>
          </Slot>
        </div>
      </div>
      <div className="ml-auto flex w-[29px] flex-col whitespace-nowrap pt-[2px] text-[7.5px] leading-[9.500px] tracking-[-0.2px] text-[#333]">
        <span className="pl-[3px]">11:29 A</span>
        <span>3/25/202</span>
      </div>
    </footer>
  );
}

export default function App() {
  return (
    <div className="flex h-[874px] w-[2092px] flex-col overflow-hidden bg-white font-['Noto_Sans','Open_Sans',sans-serif]">
      <TitleBar />
      <Ribbon />
      <TabRow />
      <main className="flex h-[737px] shrink-0">
        <SidePanel />
        <section className="relative w-[1928px] bg-[#fefefe]">
          <Scene />
          <Breadcrumb />
          <ContextToolbar />
        </section>
      </main>
      <BottomTabs />
      <StatusBar />
      <Taskbar />
    </div>
  );
}
